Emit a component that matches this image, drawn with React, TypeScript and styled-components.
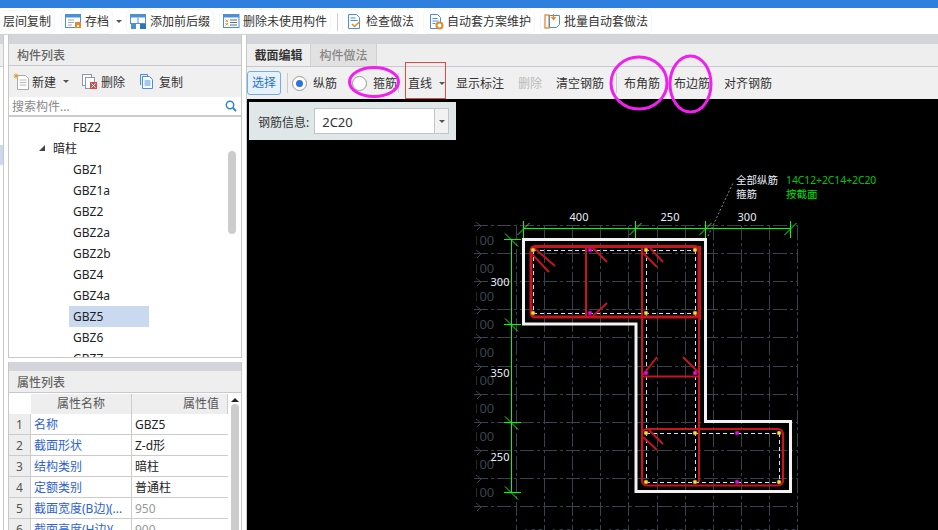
import React from "react";
import styled, { createGlobalStyle } from "styled-components";

const Global = createGlobalStyle`
  html, body { margin: 0; padding: 0; background: #fff; overflow: hidden; }
  body { font-family: "Noto Sans", "Noto Sans CJK SC", sans-serif; font-size: 12px; color: #333; }
`;

const Page = styled.div`
  position: relative;
  width: 938px;
  height: 530px;
  overflow: hidden;
  display: flex;
  flex-direction: column;
  background: #fff;
`;
const TitleBar = styled.div`height: 8px; background: #2e7fde; flex: none;`;
const TopBar = styled.div`
  height: 25px;
  flex: none;
  display: flex;
  align-items: center;
  padding: 1px 0 0 3px;
  border-bottom: 1px solid #d4d5da;
  box-sizing: content-box;
`;
const TopBtn = styled.div<{ $ml?: number }>`
  display: flex;
  align-items: center;
  gap: 3px;
  margin-left: ${(p) => p.$ml ?? 0}px;
  white-space: nowrap;
  font-size: 12px;
  line-height: 16px;
  border-radius: 2px;
  outline: 1px solid #f6f6f6;
  outline-offset: 3px;
`;
const Caret = styled.span<{ $ml: number }>`
  width: 0;
  height: 0;
  margin-left: ${(p) => p.$ml}px;
  border-left: 3px solid transparent;
  border-right: 3px solid transparent;
  border-top: 3px solid #555;
`;
const VSep = styled.div<{ $ml: number }>`
  width: 1px;
  height: 18px;
  background: #ccc;
  margin-left: ${(p) => p.$ml}px;
`;
const Body = styled.div`flex: 1; display: flex; min-height: 0;`;
const Sliver = styled.div`
  width: 3px;
  flex: none;
  display: flex;
  flex-direction: column;
  background: #fff;
  border-right: 1px solid #c8c8c8;
`;
const SliverHead = styled.div`height: 9px; background: #d4d5da;`;
const SliverBand = styled.div`height: 22px; background: #eee; border-bottom: 1px solid #ccc;`;
const SliverGap = styled.div`height: 78px;`;
const SliverSel = styled.div`height: 20px; background: #c9d9f0;`;
const LeftCol = styled.div`
  width: 234px;
  margin-left: 4px;
  flex: none;
  display: flex;
  flex-direction: column;
  gap: 4px;
`;
const Panel = styled.div<{ $h: number }>`
  height: ${(p) => p.$h}px;
  flex: none;
  display: flex;
  flex-direction: column;
  overflow: hidden;
  border-left: 1px solid #c8c8c8;
  border-right: 1px solid #c8c8c8;
  box-sizing: border-box;
`;
const PanelCap = styled.div`height: 9px; background: #d4d5da; flex: none;`;
const PanelTitle = styled.div`
  height: 21px;
  flex: none;
  background: #eee;
  border-bottom: 1px solid #c8c8d0;
  padding-left: 8px;
  font-weight: 500;
  color: #666;
  line-height: 23px;
`;
const ListTools = styled.div`
  height: 31px;
  flex: none;
  background: #f0f0f0;
  display: flex;
  align-items: center;
  padding-left: 4px;
`;
const ToolItem = styled.div<{ $ml?: number; $gap?: number }>`
  display: flex;
  align-items: center;
  gap: ${(p) => p.$gap ?? 3}px;
  margin-left: ${(p) => p.$ml ?? 0}px;
`;
const Search = styled.div`
  height: 18px;
  flex: none;
  background: #fff;
  display: flex;
  align-items: center;
  justify-content: space-between;
  padding: 0 4px 0 3px;
  color: #888;
  border-bottom: 2px solid #ccc;
`;
const TreeWrap = styled.div`
  flex: 1;
  position: relative;
  overflow: hidden;
  border-bottom: 1px solid #c8c8c8;
`;
const Tree = styled.div`padding-top: 0;`;
const TreeRow = styled.div<{ $sel?: boolean; $parent?: boolean }>`
  height: 21px;
  line-height: 21px;
  width: 80px;
  margin-left: ${(p) => (p.$parent ? 44 : 60)}px;
  padding-left: ${(p) => (p.$parent ? 0 : 4)}px;
  box-sizing: border-box;
  background: ${(p) => (p.$sel ? "#c9d9f0" : "transparent")};
  color: #222;
  display: flex;
  align-items: center;
`;
const TreeArrow = styled.span`
  width: 0;
  height: 0;
  position: absolute;
  left: 30px;
  margin-top: -1px;
  border-left: 6px solid transparent;
  border-bottom: 6px solid #444;
`;
const Thumb = styled.div`
  position: absolute;
  right: 5px;
  top: 34px;
  width: 8px;
  height: 83px;
  border-radius: 4px;
  background: #ccc;
`;
const PropGrid = styled.div`
  position: relative;
  flex: 1;
  display: grid;
  grid-template-columns: 22px 101px 96px;
  grid-auto-rows: 21px;
  align-content: start;
  width: 219px;
`;
const Corner = styled.div`height: 20px;`;
const ColHead = styled.div<{ $right?: boolean }>`
  height: 20px;
  background: #eee;
  border-right: 1px solid #ccc;
  text-align: ${(p) => (p.$right ? "right" : "center")};
  padding-right: ${(p) => (p.$right ? 8 : 0)}px;
  line-height: 20px;
  color: #555;
  box-sizing: border-box;
  margin-top: 1px;
`;
const RowNo = styled.div`
  background: #eee;
  text-align: center;
  line-height: 21px;
  color: #555;
  border-bottom: 1px solid #ccc;
  border-right: 1px solid #ccc;
  box-sizing: border-box;
`;
const NameCell = styled.div`
  color: #2f62d0;
  padding-left: 3px;
  line-height: 21px;
  white-space: nowrap;
  overflow: hidden;
  border-bottom: 1px solid #ccc;
  border-right: 1px solid #ccc;
  box-sizing: border-box;
`;
const ValCell = styled.div<{ $dim?: boolean }>`
  color: ${(p) => (p.$dim ? "#999" : "#222")};
  padding-left: 3px;
  line-height: 21px;
  border-bottom: 1px solid #ccc;
  box-sizing: border-box;
`;
const PropScroll = styled.div`
  position: absolute;
  left: 219px;
  top: 0;
  width: 14px;
  bottom: 0;
  background: #fff;
`;
const PropUp = styled.div`
  width: 0;
  height: 0;
  margin: 5px auto 2px;
  border-left: 4px solid transparent;
  border-right: 4px solid transparent;
  border-bottom: 4px solid #222;
`;
const PropThumb = styled.div`
  width: 8px;
  height: 130px;
  margin: 0 auto;
  border-radius: 4px;
  background: #ccc;
`;
const Main = styled.div`
  flex: 1;
  margin-left: 4px;
  display: flex;
  flex-direction: column;
  border-left: 1px solid #c8c8c8;
  min-width: 0;
`;
const Tabs = styled.div`
  height: 22px;
  flex: none;
  display: flex;
  background: #eee;
  border-bottom: 1px solid #c8c8d0;
`;
const Tab = styled.div<{ $active?: boolean }>`
  width: ${(p) => (p.$active ? 64 : 66)}px;
  text-align: center;
  line-height: 24px;
  font-weight: ${(p) => (p.$active ? 700 : 500)};
  color: ${(p) => (p.$active ? "#333" : "#888")};
  background: ${(p) => (p.$active ? "#eee" : "#e2e2e2")};
  border-right: 1px solid #d0d0d0;
  box-sizing: border-box;
`;
const EditBar = styled.div`
  height: 32px;
  flex: none;
  background: #f0f0f0;
  display: flex;
  align-items: center;
  white-space: nowrap;
`;
const SelectBtn = styled.div`
  width: 34px;
  height: 24px;
  box-sizing: border-box;
  border: 1px solid #74aee8;
  border-radius: 3px;
  background: #e6f1fb;
  color: #2a74c8;
  text-align: center;
  line-height: 22px;
`;
const BarSep = styled.div<{ $ml: number }>`
  width: 1px;
  height: 20px;
  background: #ccc;
  margin-left: ${(p) => p.$ml}px;
`;
const Radio = styled.div<{ $on?: boolean; $ml: number }>`
  width: 15px;
  height: 15px;
  margin-left: ${(p) => p.$ml}px;
  border-radius: 50%;
  border: 1px solid #999;
  background: #fff;
  box-sizing: border-box;
  display: flex;
  align-items: center;
  justify-content: center;
  &::after {
    content: "";
    width: 7px;
    height: 7px;
    border-radius: 50%;
    background: ${(p) => (p.$on ? "#2a74e0" : "transparent")};
  }
`;
const BarText = styled.span<{ $ml: number; $dim?: boolean }>`
  margin-left: ${(p) => p.$ml}px;
  color: ${(p) => (p.$dim ? "#bbb" : "#333")};
`;
const LineBtn = styled.div`
  width: 41px;
  height: 37px;
  margin-left: 6px;
  margin-top: -6px;
  flex: none;
  box-sizing: border-box;
  border: 1px solid #e04a45;
  display: flex;
  align-items: center;
  padding-left: 2px;
  gap: 7px;
  padding-top: 6px;
`;
const Canvas = styled.div`
  flex: 1;
  position: relative;
  background: #000;
  overflow: hidden;
`;
const InfoBox = styled.div`
  position: absolute;
  left: 2px;
  top: 3px;
  width: 207px;
  height: 38px;
  background: #dfe7e9;
  display: flex;
  align-items: center;
  padding-left: 9px;
  box-sizing: border-box;
  gap: 5px;
`;
const InfoLabel = styled.span`padding-top: 2px;`;
const InfoCombo = styled.div`
  width: 135px;
  height: 26px;
  border: 1px solid #c4c4c4;
  background: #fff;
  display: flex;
  align-items: center;
  box-sizing: border-box;
  padding-left: 7px;
  font-size: 13px;
`;
const ComboText = styled.span`flex: 1; padding-top: 2px;`;
const ComboBtn = styled.div`
  width: 13px;
  height: 100%;
  background: #f2f2f2;
  border-left: 1px solid #c4c4c4;
  display: flex;
  align-items: center;
  justify-content: center;
`;
const Drawing = styled.svg`
  display: block;
  position: absolute;
  left: -247px;
  top: -99px;
`;
const Annot = styled.svg`
  position: absolute;
  left: 0;
  top: 0;
  pointer-events: none;
`;

const docFill = "#4a8fd8";
const IconDoc = () => (
  <svg width="17" height="17" viewBox="0 0 17 17" fill="none">
    <path d="M3.5 1.5h7l3 3v11h-10z" fill="#fff" stroke={docFill} />
    <path d="M5.5 5.5h5M5.5 8h6M5.5 10.5h3" stroke={docFill} />
    <circle cx="12.5" cy="12.500" r="3" fill="#fff" stroke="#e8862a" strokeWidth="2" />
  </svg>
);
const IconSave = () => (
  <svg width="17" height="17" viewBox="0 0 17 17" fill="none">
    <rect x="0.5" y="1.5" width="15" height="13" fill="#fff" stroke="#4a8fd8" />
    <rect x="1" y="2" width="14" height="2.5" fill="#4a8fd8" />
    <path d="M3 7h6M3 9.5h6M3 12h4" stroke="#9ab" />
    <rect x="10" y="9" width="6" height="6" fill="#e8862a" />
    <rect x="12" y="12" width="2" height="2" fill="#fff" />
  </svg>
);
const IconTree = () => (
  <svg width="17" height="17" viewBox="0 0 17 17" fill="none">
    <rect x="0.5" y="1.5" width="15" height="9" fill="#fff" stroke="#4a8fd8" />
    <rect x="1" y="2" width="14" height="2.5" fill="#4a8fd8" />
    <rect x="1" y="11" width="5" height="5" fill="#4a8fd8" />
    <rect x="10" y="11" width="6" height="5" fill="#2d74bc" />
    <path d="M8 5v6" stroke="#4a8fd8" />
  </svg>
);
const IconTable = () => (
  <svg width="17" height="17" viewBox="0 0 17 17" fill="none">
    <rect x="0.5" y="1.5" width="15.5" height="13" fill="#fff" stroke="#4a8fd8" />
    <rect x="1" y="2" width="15" height="2.5" fill="#4a8fd8" />
    <path d="M2.5 6.5l2.5 2.5M5 6.5l-2.5 2.5M2.5 10l2.5 2.5M5 10l-2.5 2.5" stroke="#e8862a" />
    <path d="M7 7h7M7 9.5h7M7 12h7" stroke="#5b6f88" />
  </svg>
);
const IconCheck = () => (
  <svg width="17" height="17" viewBox="0 0 17 17" fill="none">
    <path d="M2.5 1.5h8l3 3v11h-11z" fill="#fff" stroke="#4a8fd8" />
    <path d="M4.5 5h5M4.5 7.5h7" stroke="#4a8fd8" />
    <path d="M6 11l2.5 2.5L14 8.5" stroke="#e8862a" strokeWidth="1.6" />
  </svg>
);
const IconBatch = () => (
  <svg width="17" height="17" viewBox="0 0 17 17" fill="none">
    <rect x="1" y="2" width="4" height="13" fill="#fff" stroke="#e8862a" strokeWidth="1.300" />
    <path d="M5.5 2.5h10v9l-3 3h-7z" fill="#fff" stroke="#4a8fd8" />
    <path d="M9.5 1v5M7.5 4l2 2.5L11.500 4" stroke="#e8862a" strokeWidth="1.300" />
  </svg>
);
const IconNew = () => (
  <svg width="18" height="18" viewBox="0 0 18 18" fill="none">
    <path d="M4.500 2.500h8l3 3v11h-11z" fill="#fff" stroke="#aaa" />
    <path d="M6.500 7h7M6.500 9.500h7M6.500 12h7" stroke="#bbb" />
    <path d="M3 0.500v5M0.500 3h5M1.200 1.200l3.600 3.600M4.800 1.200l-3.600 3.600" stroke="#e89a30" />
  </svg>
);
const IconDel = () => (
  <svg width="17" height="17" viewBox="0 0 17 17" fill="none">
    <rect x="1.500" y="1.500" width="9" height="11" fill="#fff" stroke="#8a9aa8" />
    <rect x="4.500" y="4.500" width="9" height="11" fill="#fff" stroke="#8a9aa8" />
    <rect x="9" y="9" width="7" height="7" fill="#d84a4a" />
    <path d="M10.500 10.500l4 4M14.500 10.500l-4 4" stroke="#fff" />
  </svg>
);
const IconCopy = () => (
  <svg width="17" height="17" viewBox="0 0 17 17" fill="none">
    <path d="M1.500 12V1.500h7v2" stroke="#4a8fd8" />
    <path d="M3.500 3.500h7l3 3v9h-10z" fill="#fff" stroke="#4a8fd8" />
    <path d="M5.500 8h6M5.500 10h6M5.500 12h6" stroke="#4a8fd8" />
  </svg>
);
const IconSearch = () => (
  <svg width="12" height="12" viewBox="0 0 12 12" fill="none">
    <circle cx="5" cy="5" r="3.700" stroke="#2f83c8" strokeWidth="1.500" />
    <path d="M8 8l3 3" stroke="#2f83c8" strokeWidth="1.800" />
  </svg>
);

const treeItems = ["GBZ1", "GBZ1a", "GBZ2", "GBZ2a", "GBZ2b", "GBZ4", "GBZ4a", "GBZ5", "GBZ6", "GBZ7"];
const props: [string, string, boolean?][] = [
  ["名称", "GBZ5"],
  ["截面形状", "Z-d形"],
  ["结构类别", "暗柱"],
  ["定额类别", "普通柱"],
  ["截面宽度(B边)(...", "950", true],
  ["截面高度(H边)(...", "900", true],
];

const range = (a: number, n: number, s: number) => Array.from({ length: n }, (_, i) => a + i * s);
const gridXs = range(516, 11, 28.1).map(Math.round);
const gridYs = range(225, 11, 28.1).map(Math.round);
const corners: [number, number][] = [[533,250],[646,250],[695,250],[533,313],[646,313],[695,313],[646,433],[695,433],[779,433],[646,482],[695,482],[779,482]];
const mags: [number, number][] = [[590,250],[590,313],[646,373],[695,373],[737,433],[737,482]];
const hooks: number[][] = [
  [533,247,555,266],[530,252,549,272],[592,247,607,262],[593,316,607,303],
  [643,253,657,267],[650,248,663,262],[643,375,657,357],[683,357,698,372],
  [643,437,657,450],[649,430,663,444],
];
const cadFont = '"Noto Sans CJK SC", "Noto Sans", sans-serif';

const Cad = () => (
  <Drawing width={938} height={530} viewBox="0 0 938 530">
    <defs>
      <clipPath id="leftLabels"><rect x={476} y={220} width={30} height={310} /></clipPath>
    </defs>
    <g stroke="#38414d" strokeWidth="1" strokeDasharray="14 3 3 3">
      {gridYs.map((y) => <line key={y} x1={474} x2={798} y1={y + 0.5} y2={y + 0.5} />)}
      {gridXs.map((x) => <line key={x} x1={x + 0.5} x2={x + 0.5} y1={226} y2={530} />)}
    </g>
    <g stroke="#38414d" fill="none">
      {gridYs.map((y) => <path key={y} d={`M476 ${y - 3}L481 ${y + 1}L477 ${y + 5}`} />)}
    </g>
    <g fill="#3a4350" fontFamily='"Noto Sans", sans-serif' fontSize="13" clipPath="url(#leftLabels)">
      {range(239.5, 10, 28.1).map((y) => <text key={y} x={472} y={y + 5}>100</text>)}
    </g>
    <g fill="#3a4350" fontFamily='"Noto Sans", sans-serif' fontSize="13">
      {range(531, 10, 28.1).map((x) => <text key={x} x={x - 9} y={537.5}>100</text>)}
    </g>
    <g stroke="#00ff00" strokeWidth="1" fill="none">
      <path d="M523 228.500H791M511.500 239V492" />
      {[523.5, 635.5, 705.5, 790.5].map((x) => (
        <path key={x} d={`M${x} 221V238M${x - 6} 235L${x + 6} 223`} />
      ))}
      {[239.5, 324.5, 422.5, 492.5].map((y) => (
        <path key={y} d={`M504 ${y}H521M${505} ${y - 6}L${518} ${y + 7}`} />
      ))}
    </g>
    <path d="M708 236L733 183" stroke="#888" strokeDasharray="2 2" fill="none" />
    <g fill="#e8eef8" fontFamily='"Noto Sans", sans-serif' fontSize="11" textAnchor="middle">
      <text x={579} y={221}>400</text>
      <text x={670} y={221}>250</text>
      <text x={747} y={221}>300</text>
      <text x={500} y={286}>300</text>
      <text x={500} y={377}>350</text>
      <text x={500} y={461}>250</text>
    </g>
    <g fontFamily={cadFont} fontSize="10.500">
      <text x={736} y={184} fill="#e8eef8">全部纵筋</text>
      <text x={736} y={198} fill="#e8eef8">箍筋</text>
      <text x={786} y={184} fill="#00c800" fontFamily='"Noto Sans", sans-serif' fontSize="10.300">14C12+2C14+2C20</text>
      <text x={786} y={198} fill="#00e000">按截面</text>
    </g>
    <path d="M523.500 239.500H705.500V421.500H790.500V491.500H636V324H523.500Z" fill="none" stroke="#f2f2f2" strokeWidth="3" />
    <g fill="none" stroke="#cfe4ff" strokeWidth="1" strokeDasharray="4 3">
      <path d="M533 250.500H695M533 313.500H695M533.500 250V313M646.500 250V482M695.500 250V482M646 433.500H779M646 482.500H779M779.500 433V482" />
    </g>
    <g fill="none" stroke="#c8141e">
      <rect x={531} y={246.500} width={168} height={70.500} rx={4} strokeWidth="3" />
      <path d="M586 246V317" strokeWidth="2" />
      <path d="M642 246V480M699 317V482M642 376.500H699" strokeWidth="2" />
      <path d="M699.500 246V320" strokeWidth="3" />
      <rect x={642} y={429} width={141} height={56.500} rx={5} strokeWidth="2.200" />
      {hooks.map((h, i) => <line key={i} x1={h[0]} y1={h[1]} x2={h[2]} y2={h[3]} strokeWidth="2" />)}
    </g>
    {corners.map(([x, y]) => <circle key={`${x}-${y}`} cx={x} cy={y} r={2} fill="#ffe030" stroke="#a08020" strokeWidth="0.600" />)}
    {mags.map(([x, y]) => <circle key={`${x}-${y}`} cx={x} cy={y} r={2} fill="#e010e0" stroke="#a000a0" strokeWidth="0.600" />)}
  </Drawing>
);

export default function App() {
  return (
    <Page>
      <Global />
      <TitleBar />
      <TopBar>
        <TopBtn>层间复制</TopBtn>
        <TopBtn $ml={14}><IconSave />存档</TopBtn>
        <Caret $ml={7} />
        <TopBtn $ml={8}><IconTree />添加前后缀</TopBtn>
        <TopBtn $ml={13}><IconTable />删除未使用构件</TopBtn>
        <VSep $ml={10} />
        <TopBtn $ml={8}><IconCheck />检查做法</TopBtn>
        <TopBtn $ml={13}><IconDoc />自动套方案维护</TopBtn>
        <TopBtn $ml={13}><IconBatch />批量自动套做法</TopBtn>
      </TopBar>
      <Body>
        <Sliver>
          <SliverHead />
          <SliverBand />
          <SliverGap />
          <SliverSel />
        </Sliver>
        <LeftCol>
          <Panel $h={323}>
            <PanelCap />
            <PanelTitle>构件列表</PanelTitle>
            <ListTools>
              <ToolItem $gap={1}><IconNew />新建</ToolItem>
              <Caret $ml={7} />
              <ToolItem $ml={12}><IconDel />删除</ToolItem>
              <ToolItem $ml={14}><IconCopy />复制</ToolItem>
            </ListTools>
            <Search>搜索构件...<IconSearch /></Search>
            <TreeWrap>
              <Tree>
                <TreeRow>FBZ2</TreeRow>
                <TreeRow $parent><TreeArrow />暗柱</TreeRow>
                {treeItems.map((t) => <TreeRow key={t} $sel={t === "GBZ5"}>{t}</TreeRow>)}
              </Tree>
              <Thumb />
            </TreeWrap>
          </Panel>
          <Panel $h={168}>
            <PanelCap />
            <PanelTitle>属性列表</PanelTitle>
            <PropGrid>
              <Corner />
              <ColHead>属性名称</ColHead>
              <ColHead $right>属性值</ColHead>
              {props.map(([n, v, d], i) => (
                <React.Fragment key={n}>
                  <RowNo>{i + 1}</RowNo>
                  <NameCell>{n}</NameCell>
                  <ValCell $dim={d}>{v}</ValCell>
                </React.Fragment>
              ))}
              <PropScroll><PropUp /><PropThumb /></PropScroll>
            </PropGrid>
          </Panel>
        </LeftCol>
        <Main>
          <PanelCap />
          <Tabs>
            <Tab $active>截面编辑</Tab>
            <Tab>构件做法</Tab>
          </Tabs>
          <EditBar>
            <SelectBtn>选择</SelectBtn>
            <BarSep $ml={6} />
            <Radio $on $ml={4} />
            <BarText $ml={6}>纵筋</BarText>
            <Radio $ml={15} />
            <BarText $ml={6}>箍筋</BarText>
            <BarSep $ml={1} />
            <LineBtn>直线<Caret $ml={0} /></LineBtn>
            <BarText $ml={10}>显示标注</BarText>
            <BarText $ml={14} $dim>删除</BarText>
            <BarText $ml={14}>清空钢筋</BarText>
            <BarSep $ml={12} />
            <BarText $ml={7}>布角筋</BarText>
            <BarText $ml={14}>布边筋</BarText>
            <BarText $ml={14}>对齐钢筋</BarText>
          </EditBar>
          <Canvas>
            <Cad />
            <InfoBox>
              <InfoLabel>钢筋信息:</InfoLabel>
              <InfoCombo>
                <ComboText>2C20</ComboText>
                <ComboBtn><Caret $ml={0} /></ComboBtn>
              </InfoCombo>
            </InfoBox>
          </Canvas>
        </Main>
      </Body>
      <Annot width={938} height={530} viewBox="0 0 938 530">
        <g fill="none" stroke="#f020ee" strokeWidth="3">
          <ellipse cx={374} cy={82} rx={24.500} ry={14.500} />
          <ellipse cx={639} cy={83} rx={28} ry={26} />
          <ellipse cx={690.500} cy={84} rx={20.500} ry={28} />
        </g>
      </Annot>
    </Page>
  );
}
